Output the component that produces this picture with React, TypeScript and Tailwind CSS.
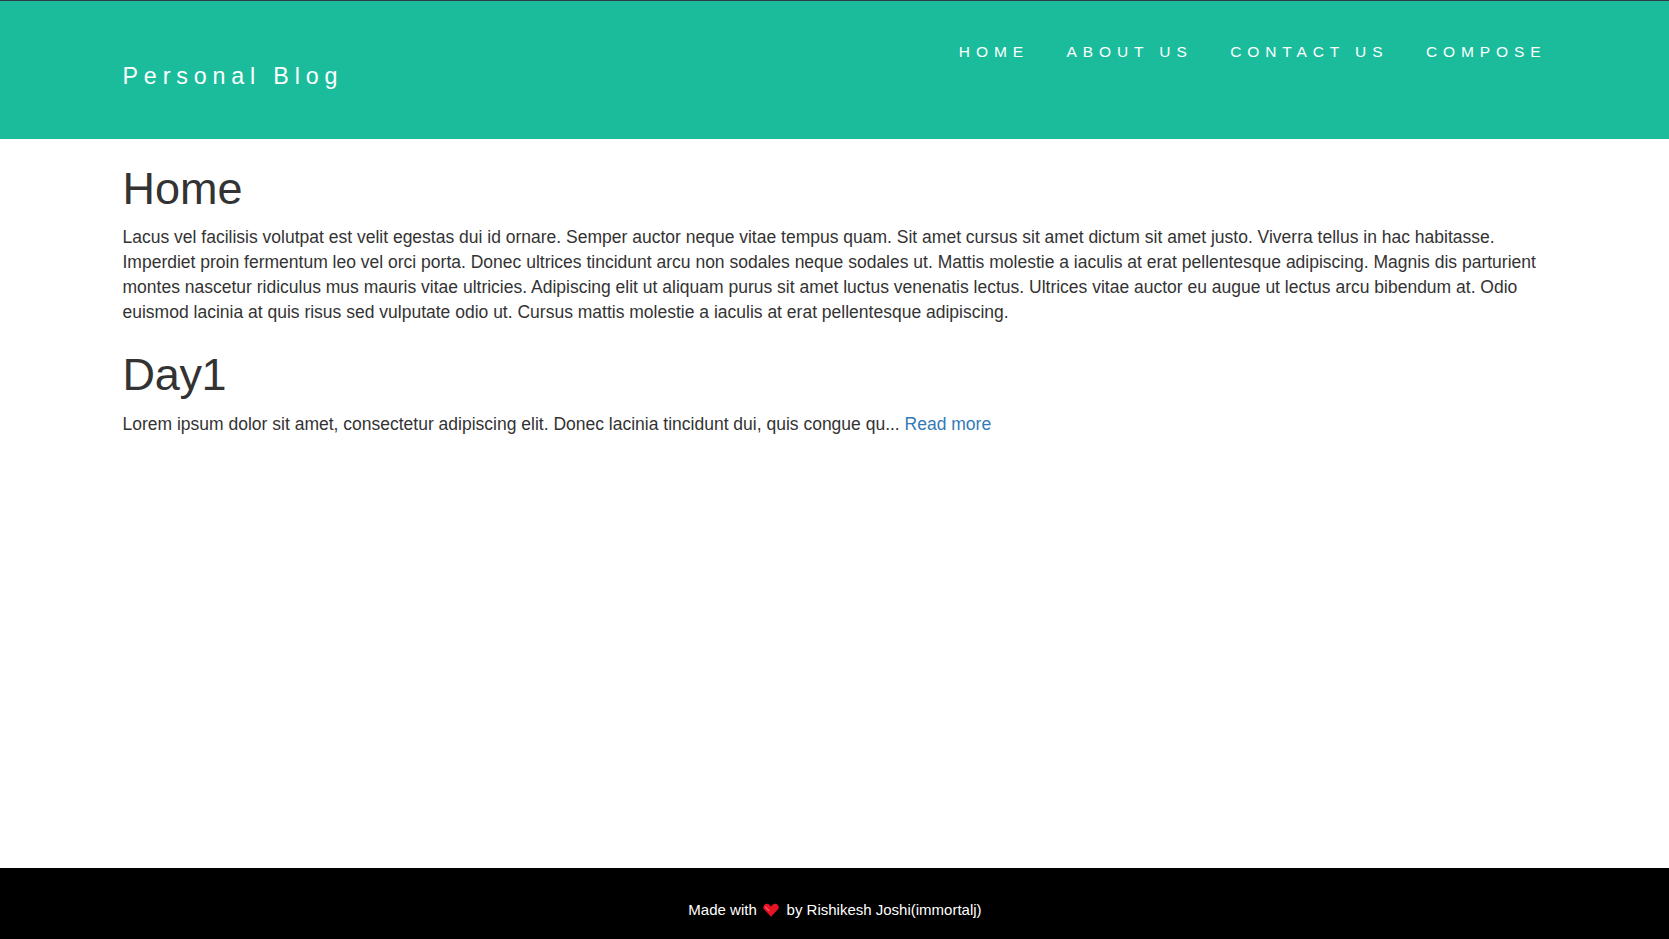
const links = ["Home", "About us", "Contact us", "Compose"];

function Heart() {
  return (
    <svg className="mr-[3px] ml-[2.5px] inline-block h-[14px] w-[16px] align-[-2px]" viewBox="0 0 16 14">
      <path d="M8 13.800 1.200 6.600C0 5.200 0 3.200 1.200 1.900 2.700.3 4.900.3 6.400 1.800L8 3.400 9.600 1.800C11.100.3 13.300.3 14.800 1.900 16 3.200 16 5.200 14.800 6.600Z" fill="#e81224" />
      <path d="M2.400 4 6 7.600" fill="none" stroke="#f4626e" strokeWidth="1.200" strokeLinecap="round" />
    </svg>
  );
}

export default function App() {
  return (
    <div className="flex h-[939px] flex-col overflow-hidden bg-white font-['Liberation_Sans',Arial,sans-serif] text-[17.5px] leading-[25px] text-[#333]">
      <header className="flex h-[139px] shrink-0 justify-between border-t border-[#2f3e46] bg-[#1abc9c] px-[122.5px] text-white">
        <div className="pt-[58px] text-[23.25px] leading-[34px] tracking-[5.85px]">Personal Blog</div>
        <nav className="flex gap-[37.5px] pt-[38px] text-[15.5px] uppercase tracking-[5.9px]">
          {links.map((l) => (
            <a key={l} href="#">{l}</a>
          ))}
        </nav>
      </header>
      <main className="flex-1 px-[122.5px]">
        <h1 className="pt-[25px] text-[45px] leading-[50px]">Home</h1>
        <p className="mt-[11px]">
          Lacus vel facilisis volutpat est velit egestas dui id ornare. Semper auctor neque vitae tempus quam. Sit amet cursus sit amet dictum sit amet justo. Viverra tellus in hac habitasse. Imperdiet proin fermentum leo vel orci porta. Donec ultrices tincidunt arcu non sodales neque sodales ut. Mattis molestie a iaculis at erat pellentesque adipiscing. Magnis dis parturient montes nascetur ridiculus mus mauris vitae ultricies. Adipiscing elit ut aliquam purus sit amet luctus venenatis lectus. Ultrices vitae auctor eu augue ut lectus arcu bibendum at. Odio euismod lacinia at quis risus sed vulputate odio ut. Cursus mattis molestie a iaculis at erat pellentesque adipiscing.
        </p>
        <h1 className="pt-[25px] text-[45px] leading-[50px] tracking-[-0.3px]">Day1</h1>
        <p className="mt-[12px]">
          Lorem ipsum dolor sit amet, consectetur adipiscing elit. Donec lacinia tincidunt dui, quis congue qu... <a href="#" className="text-[#337ab7]">Read more</a>
        </p>
      </main>
      <footer className="h-[71px] shrink-0 bg-black pt-[29px] pl-px text-center text-[15px] leading-[25px] text-white">
        Made with <Heart /> by Rishikesh Joshi(immortalj)
      </footer>
    </div>
  );
}
